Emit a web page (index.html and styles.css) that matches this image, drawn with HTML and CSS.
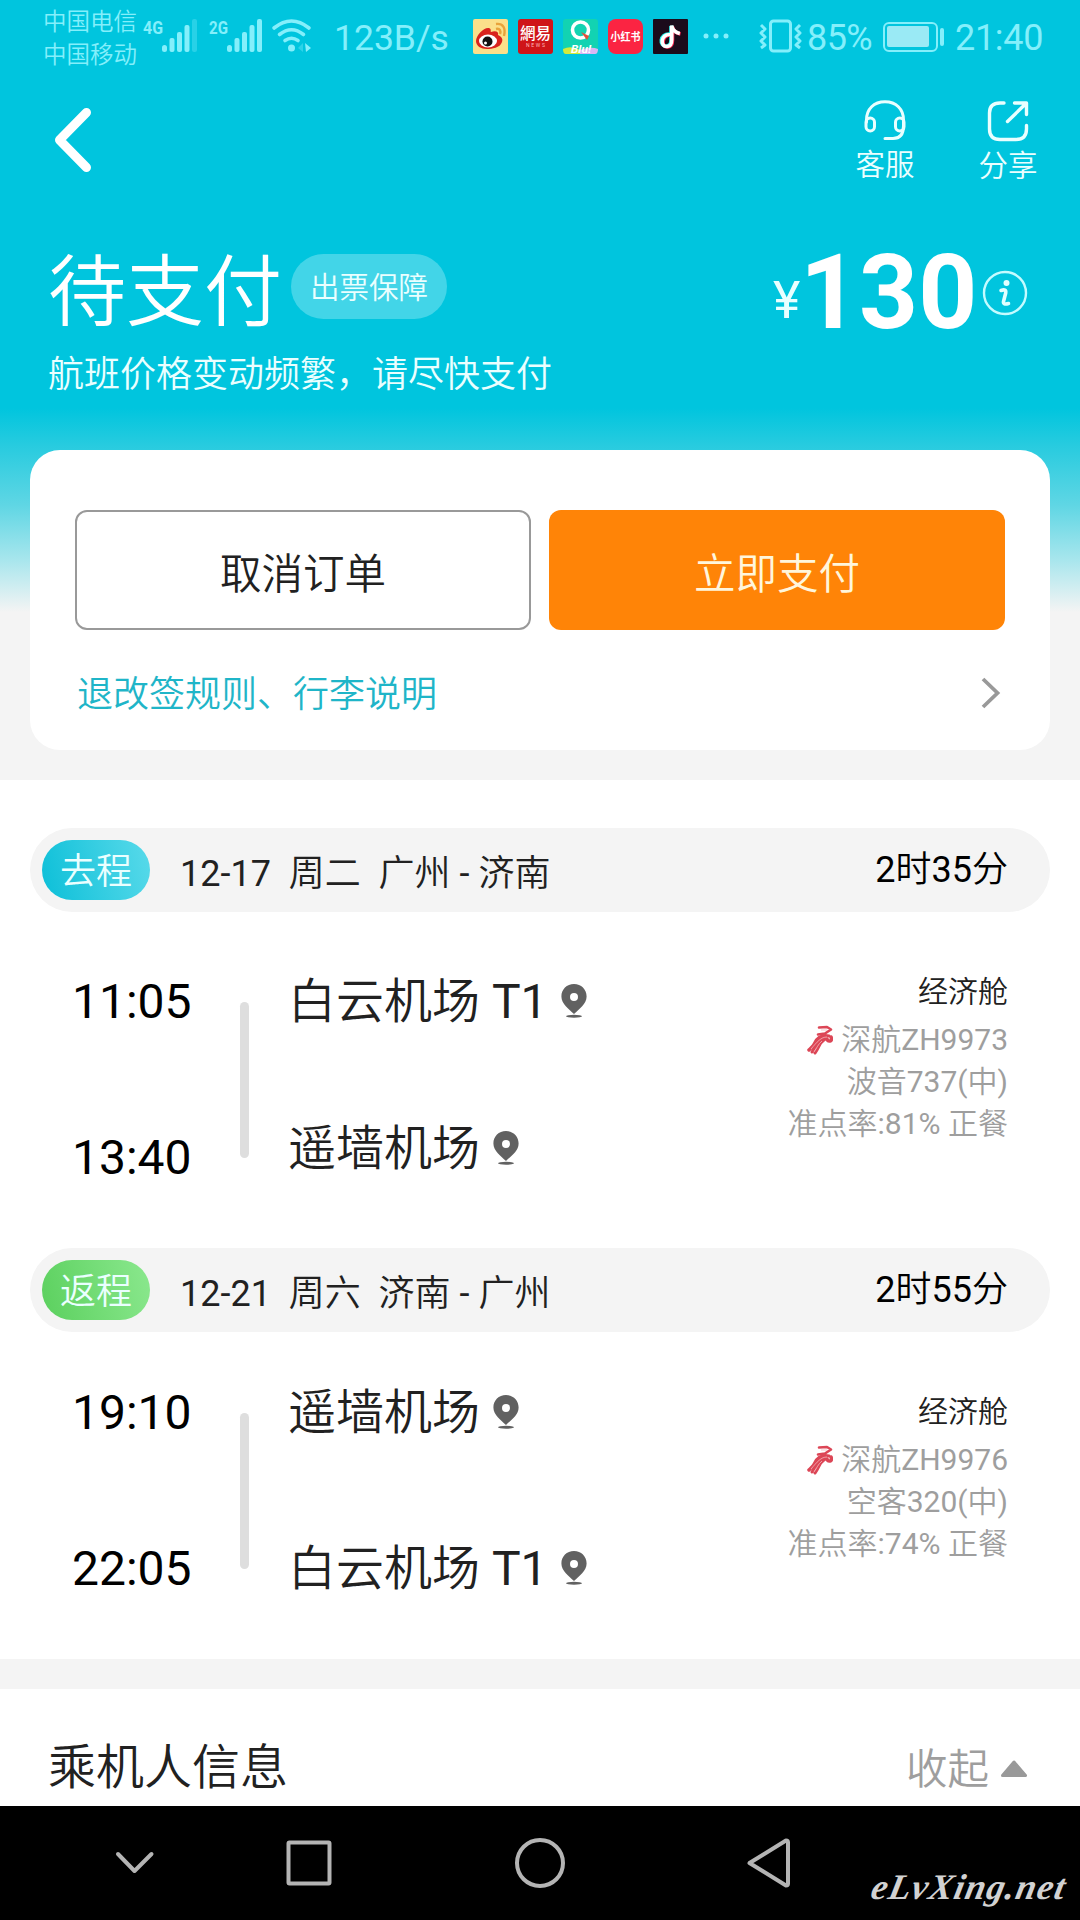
FILE: index.html
```html
<!DOCTYPE html>
<html lang="zh-CN">
  <head>
    <meta charset="UTF-8" />
    <meta name="viewport" content="width=device-width, initial-scale=1.0" />
    <title>订单详情</title>
    <link rel="stylesheet" href="styles.css">
  </head>
  <body>
    <!-- 公用图标 -->
    <svg class="symbols" width="0" height="0">
      <symbol id="pin" viewBox="0 0 26 34">
        <path fill="#616161" fill-rule="evenodd" d="M13 0C5.8 0 .4 5.400 .4 12.400C.4 20 8 25 13 30C18 25 25.600 20 25.600 12.400C25.600 5.400 20.200 0 13 0ZM13 9a4 4 0 1 1 0 8a4 4 0 1 1 0-8Z" />
        <ellipse cx="13" cy="32.300" rx="8" ry="1.500" fill="#616161" />
      </symbol>
      <symbol id="airline" viewBox="0 0 26 30">
        <g fill="none" stroke="#dc4656" stroke-linecap="round" stroke-linejoin="round">
          <path stroke-width="2.600" d="M12 2.500L20 2L24 4.500L18 8.500L11 9.500" />
          <path stroke-width="3.500" d="M24 12C26 17 21 17 20 14C14 12 9 18 2 25" />
          <path stroke-width="3" d="M22 11C14 9 9 14 7 19M17 15C12 18 12 23 8 28M13 17C8 20 7 24 5 27" />
        </g>
        <path fill="none" stroke="#f6b6bd" stroke-width="0.800" d="M14 5L20 5M20 12C14 12 10 17 4 24M15 16C11 19 10 23 7 27" />
      </symbol>
    </svg>

    <header class="hero">
      <div class="status">
        <div class="carrier">
          <span>中国电信</span>
          <span>中国移动</span>
        </div>
        <svg class="signal" width="170" height="40" viewBox="142 14 170 40">
          <g fill="#84effb">
            <text class="net" x="143" y="34" textLength="20" lengthAdjust="spacingAndGlyphs">4G</text>
            <rect x="162" y="45" width="5" height="7" rx="2.500" />
            <rect x="169.500" y="38" width="5" height="14" rx="2" />
            <rect x="177" y="32" width="5" height="20" rx="2" />
            <rect x="184.500" y="25" width="5" height="27" rx="2" />
            <rect x="192" y="19" width="5" height="33" rx="2" opacity="0.300" />
            <text class="net" x="209" y="34" textLength="19" lengthAdjust="spacingAndGlyphs">2G</text>
            <rect x="227" y="45" width="5" height="7" rx="2.500" />
            <rect x="234.500" y="38" width="5" height="14" rx="2" />
            <rect x="242" y="32" width="5" height="20" rx="2" />
            <rect x="249.500" y="25" width="5" height="27" rx="2" />
            <rect x="257" y="19" width="5" height="33" rx="2" />
            <circle cx="291.500" cy="48" r="3.500" />
            <path d="M305 43L311 48L306 52Z" />
            <path opacity="0.350" d="M303 43V52L298 48Z" />
          </g>
          <path fill="none" stroke="#84effb" stroke-width="3.600" stroke-linecap="round" d="M274 28Q291.500 14 309 28M279.500 34.500Q291.500 25 303.500 34.500M285 40.500Q291.500 36 298 40.500" />
        </svg>
        <span class="speed">123B/s</span>
        <div class="apps">
          <svg width="35" height="35" viewBox="0 0 35 35">
            <rect width="35" height="35" rx="2" fill="#fbe08a" />
            <path fill="#d9231d" d="M3 22C3 16 11 8 16 9C19 10 17 13 18 13C23 11 26 13 25 16C29 18 30 20 29 23C27 29 19 30 14 30C8 30 3 27 3 22Z" />
            <ellipse cx="15" cy="22" rx="9" ry="6.500" fill="#fff" />
            <circle cx="14.500" cy="22.500" r="5" fill="#111" />
            <circle cx="12.500" cy="24" r="1.500" fill="#fff" />
            <path fill="none" stroke="#e8a33b" stroke-width="2.400" d="M23 5C30 4 33 9 31 17M23 10C27 9 28 12 27 15" />
          </svg>
          <svg width="35" height="35" viewBox="0 0 35 35">
            <rect width="35" height="35" rx="3" fill="#cf1418" />
            <text x="2" y="20" fill="#fff" class="app-serif" textLength="31" lengthAdjust="spacingAndGlyphs">網易</text>
            <text x="8" y="28" fill="#fbb" class="app-tiny" textLength="19">NEWS</text>
          </svg>
          <svg width="35" height="35" viewBox="0 0 35 35">
            <rect width="35" height="35" rx="3" fill="#12d3b2" />
            <path fill="#d3ea3c" d="M0 30Q8 26 17 31V35H3Q0 35 0 30Z" />
            <path fill="#d8b6f5" d="M17 31Q28 27 35 30Q35 35 32 35H17Z" />
            <ellipse cx="17.500" cy="11" rx="8" ry="8" fill="none" stroke="#fff" stroke-width="3.600" />
            <path fill="#e2503b" d="M18 13L26 17L24 21Z" />
            <text x="8" y="33.500" fill="#fff" class="app-blu" textLength="20" lengthAdjust="spacingAndGlyphs">Blu!</text>
          </svg>
          <svg width="35" height="35" viewBox="0 0 35 35">
            <rect width="35" height="35" rx="8" fill="#fb2442" />
            <text x="2.500" y="21.500" fill="#fff" class="app-red" textLength="30" lengthAdjust="spacingAndGlyphs">小红书</text>
          </svg>
          <svg width="35" height="35" viewBox="0 0 35 35">
            <rect width="35" height="35" rx="1" fill="#1b0b1b" />
            <g fill="none" stroke-width="3.600">
              <path stroke="#25f4ee" d="M17 15C6 14 6 28 13.500 27C18 26.500 18 23 18 20V7C19 11 21 13 26 14" />
              <path stroke="#fe2c55" d="M18.500 16C8 15.500 8 29 15 28C19.500 27.500 19.500 24 19.500 21V8C20.500 12 23 14 27.500 15" />
              <path stroke="#fff" d="M17.800 15.500C7 14.800 7 28.500 14.200 27.500C18.700 27 18.700 23.500 18.700 20.500V6.500C19.700 11.500 22 13.500 26.800 14.500" />
            </g>
          </svg>
          <svg width="27" height="35" viewBox="0 0 27 35" class="more">
            <g fill="#84effb"><circle cx="3" cy="17" r="2.500" /><circle cx="13" cy="17" r="2.500" /><circle cx="23" cy="17" r="2.500" /></g>
          </svg>
        </div>
        <svg class="vibrate" width="44" height="34" viewBox="0 0 44 34">
          <g fill="none" stroke="#84effb" stroke-width="3" stroke-linejoin="round">
            <rect x="11.500" y="2" width="20" height="30" rx="3" />
            <path d="M2 6L6 10L2 14L6 18L2 22L6 26L2 29M41 6L37 10L41 14L37 18L41 22L37 26L41 29" />
          </g>
        </svg>
        <span class="percent">85%</span>
        <svg class="battery" width="62" height="30" viewBox="0 0 62 30">
          <rect x="1" y="1" width="53" height="28" rx="5" fill="none" stroke="#84effb" stroke-width="2" />
          <rect x="4" y="4" width="42" height="21" rx="2" fill="#9aeaf5" />
          <rect x="57" y="6" width="4" height="18" rx="2" fill="#84effb" />
        </svg>
        <span class="clock">21:40</span>
      </div>

      <div class="topbar">
        <svg class="back" width="38" height="66" viewBox="0 0 38 66">
          <path fill="none" stroke="#fff" stroke-width="9" stroke-linecap="round" stroke-linejoin="round" d="M32.500 5.500L5.500 33L32.500 60.500" />
        </svg>
        <div class="tool service">
          <svg width="42" height="42" viewBox="0 0 42 42">
            <g fill="none" stroke="#e9ffff" stroke-width="3" stroke-linecap="round" stroke-linejoin="round">
              <path d="M2.500 22V20C2.500 9 10 1.800 21 1.800S39.500 9 39.500 20V26C39.500 34 36 38.500 29 38.500H21" />
              <rect x="2" y="18" width="8.500" height="13" rx="4.200" />
              <rect x="31.500" y="18" width="8.500" height="13" rx="4.200" />
            </g>
          </svg>
          <span>客服</span>
        </div>
        <div class="tool share">
          <svg width="42" height="42" viewBox="0 0 42 42">
            <g fill="none" stroke="#e9ffff" stroke-width="3.400" stroke-linecap="round" stroke-linejoin="round">
              <path d="M17 3H13Q2.500 3 2.500 13V29Q2.500 39.500 13 39.500H29Q39.500 39.500 39.500 29V25.500" />
              <path d="M27.500 3H39.500V14.500M38.500 4L20.500 21.500" />
            </g>
          </svg>
          <span>分享</span>
        </div>
      </div>

      <div class="summary">
        <h1 class="state">待支付</h1>
        <span class="guard">出票保障</span>
        <span class="yen">¥</span>
        <strong class="price">130</strong>
        <svg class="info-icon" width="46" height="46" viewBox="0 0 46 46">
          <circle cx="23" cy="23" r="21" fill="none" stroke="#c4fbff" stroke-width="2.400" />
          <circle cx="24.500" cy="13" r="3" fill="#e0ffff" />
          <path fill="none" stroke="#e0ffff" stroke-width="3.600" stroke-linecap="round" stroke-linejoin="round" d="M19 20.500Q24.500 18.500 23.700 23L21.500 31.500Q21 35 26.500 33.500" />
        </svg>
      </div>
      <p class="notice">航班价格变动频繁，请尽快支付</p>
    </header>

    <section class="card">
      <div class="actions">
        <button type="button" class="btn btn-cancel">取消订单</button>
        <button type="button" class="btn btn-pay">立即支付</button>
      </div>
      <div class="rules">
        <span>退改签规则、行李说明</span>
        <svg width="20" height="32" viewBox="0 0 20 32">
          <path fill="none" stroke="#999" stroke-width="3.800" d="M2 2L16.500 16L2 30" />
        </svg>
      </div>
    </section>

    <section class="flights">
      <div class="leg-head">
        <span class="tag tag-go">去程</span>
        <span class="date">12-17  周二  广州 - 济南</span>
        <span class="duration">2时35分</span>
      </div>
      <div class="leg leg-go">
        <div class="times"><span>11:05</span><span>13:40</span></div>
        <div class="line"></div>
        <div class="places">
          <span>白云机场 T1 <svg class="pin"><use href="#pin" /></svg></span>
          <span>遥墙机场 <svg class="pin"><use href="#pin" /></svg></span>
        </div>
        <div class="detail">
          <span class="cabin">经济舱</span>
          <span><svg class="airline"><use href="#airline" /></svg>深航ZH9973</span>
          <span>波音737(中)</span>
          <span>准点率:81% 正餐</span>
        </div>
      </div>

      <div class="leg-head">
        <span class="tag tag-back">返程</span>
        <span class="date">12-21  周六  济南 - 广州</span>
        <span class="duration">2时55分</span>
      </div>
      <div class="leg leg-back">
        <div class="times"><span>19:10</span><span>22:05</span></div>
        <div class="line"></div>
        <div class="places">
          <span>遥墙机场 <svg class="pin"><use href="#pin" /></svg></span>
          <span>白云机场 T1 <svg class="pin"><use href="#pin" /></svg></span>
        </div>
        <div class="detail">
          <span class="cabin">经济舱</span>
          <span><svg class="airline"><use href="#airline" /></svg>深航ZH9976</span>
          <span>空客320(中)</span>
          <span>准点率:74% 正餐</span>
        </div>
      </div>
    </section>

    <section class="passenger">
      <h2>乘机人信息</h2>
      <span class="fold">收起</span>
      <svg width="28" height="18" viewBox="0 0 28 18">
        <path fill="#999" stroke="#999" stroke-width="3" stroke-linejoin="round" d="M14 2L25.500 15.500H2.500Z" />
      </svg>
    </section>

    <footer class="navbar">
      <svg width="1080" height="114" viewBox="0 0 1080 114">
        <g fill="none" stroke="#b4b4b4" stroke-width="4" stroke-linecap="round" stroke-linejoin="round">
          <path d="M118 48L134.500 65L151.500 48" />
          <rect x="288.500" y="36.500" width="41" height="41" rx="1" />
          <circle cx="540" cy="57" r="23" />
          <path d="M749.500 57L786 34.500Q788 34.500 788 36.500V77.500Q788 79.500 786 79.500Z" />
        </g>
      </svg>
      <span class="watermark">eLvXing.net</span>
    </footer>
  </body>
</html>
```
FILE: styles.css
```css
* {
  box-sizing: border-box;
}
body {
  margin: 0;
  width: 1080px;
  height: 1920px;
  overflow: hidden;
  display: flex;
  flex-direction: column;
  background: linear-gradient(#00c5de 0, #00c5de 408px, #27cbdf 445px, #5fd6e4 505px, #a8e6ed 560px, #f4f4f4 612px);
  font-family: Roboto, "Noto Sans CJK SC DemiLight", "Noto Sans CJK SC Light", "Noto Sans CJK SC", sans-serif;
  color: #212121;
}
svg {
  display: block;
  flex: none;
}
.symbols {
  position: absolute;
}
h1,
h2,
p {
  margin: 0;
  font-weight: 400;
}

/* 顶部 */
.hero {
  height: 450px;
  color: #eaffff;
}
.status {
  display: flex;
  align-items: flex-start;
  height: 72px;
  padding-left: 43px;
  color: #84effb;
  font-size: 36px;
  line-height: 36px;
}
.carrier {
  width: 99px;
  padding-top: 6px;
  font-size: 23.5px;
  line-height: 33px;
}
.carrier span {
  display: block;
}
.signal {
  margin-top: 14px;
  overflow: visible;
}
.net {
  font-size: 19px;
  font-weight: 700;
}
.speed {
  width: 139px;
  margin: 20px 0 0 22px;
  font-size: 35.5px;
}
.apps {
  display: flex;
  gap: 10px;
  padding-top: 19px;
}
.more {
  margin-left: 5px;
}
.app-serif {
  font: 500 16px "Noto Sans CJK TC", sans-serif;
}
.app-tiny {
  font-size: 5px;
}
.app-blu {
  font: italic 700 11px Roboto, sans-serif;
}
.app-red {
  font: 700 11px "Noto Sans CJK SC", sans-serif;
}
.vibrate {
  margin: 19px 0 0 29px;
}
.percent {
  width: 80px;
  margin-top: 20px;
  padding-left: 4px;
  letter-spacing: -0.6px;
}
.battery {
  margin-top: 22px;
}
.clock {
  margin: 20px 0 0 10px;
  letter-spacing: -0.3px;
}

.topbar {
  display: flex;
  height: 158px;
  padding-left: 54px;
  font-size: 29.5px;
  line-height: 36px;
}
.back {
  margin: 35px 763px 0 0;
}
.tool {
  display: flex;
  flex-direction: column;
  align-items: center;
  width: 60px;
}
.service {
  padding-top: 28px;
}
.service span {
  margin-top: 5px;
}
.share {
  margin-left: 63px;
  padding-top: 28px;
}
.share span {
  margin-top: 6px;
}

.summary {
  display: flex;
  height: 116px;
  padding-left: 48px;
}
.state {
  width: 243px;
  padding-top: 19px;
  font-size: 78px;
  line-height: 90px;
  color: #fff;
}
.guard {
  width: 156px;
  height: 65px;
  margin-top: 24px;
  padding-top: 2px;
  border-radius: 33px;
  background: #42d5e8;
  font-size: 29.5px;
  line-height: 65px;
  text-align: center;
}
.yen {
  width: 27px;
  margin: 41px 0 0 326px;
  font-size: 52px;
  line-height: 60px;
}
.price {
  width: 181px;
  padding-top: 13px;
  font-size: 103px;
  line-height: 100px;
  color: #fff;
}
.info-icon {
  margin-top: 40px;
  margin-left: 1px;
}
.notice {
  padding: 8px 0 0 48px;
  font-size: 36px;
  line-height: 42px;
}

/* 支付卡片 */
.card {
  flex: none;
  height: 300px;
  margin: 0 30px 30px;
  padding: 60px 45px 0;
  border-radius: 30px;
  background: #fff;
}
.actions {
  display: flex;
  gap: 18px;
}
.btn {
  flex: none;
  width: 456px;
  height: 120px;
  padding: 2px 0 0;
  border: 2px solid #999;
  border-radius: 12px;
  background: #fff;
  color: #212121;
  font-family: inherit;
  font-size: 41.5px;
}
.btn-pay {
  border: 0;
  background: #ff8407;
  color: #fff6dc;
}
.rules {
  display: flex;
  align-items: center;
  justify-content: space-between;
  height: 54px;
  margin-top: 36px;
  padding: 0 4px 0 2px;
  color: #1fb5c8;
  font-size: 36px;
}
.rules span {
  padding-bottom: 4px;
}

/* 航班 */
.flights {
  flex: none;
  height: 879px;
  padding: 48px 30px 0;
  background: #fff;
}
.leg-head {
  display: flex;
  align-items: center;
  height: 84px;
  padding: 0 42px 0 12px;
  border-radius: 42px;
  background: #f4f4f4;
  font-size: 36px;
}
.tag {
  width: 108px;
  height: 60px;
  padding-top: 2px;
  border-radius: 30px;
  line-height: 60px;
  text-align: center;
  color: #eaffff;
}
.tag-go {
  background: linear-gradient(75deg, #0cbfd8, #59daea);
}
.tag-back {
  background: linear-gradient(75deg, #5bd05e, #8be88e);
}
.date {
  flex: 1;
  padding: 0 0 1px 30px;
  white-space: pre;
}
.duration {
  padding-bottom: 8px;
  color: #000;
}
.leg {
  display: flex;
  padding: 0 42px 0 42px;
}
.leg-go {
  height: 336px;
}
.leg-back {
  height: 327px;
}
.times,
.places {
  display: flex;
  flex-direction: column;
  gap: 100px;
  padding-top: 62px;
  font-size: 48px;
  line-height: 56px;
}
.times {
  width: 168px;
  color: #000;
}
.line {
  width: 9px;
  height: 156px;
  margin-top: 90px;
  border-radius: 5px;
  background: #dedede;
}
.places {
  flex: 1;
  padding-left: 39px;
}
.leg-go .places {
  gap: 91px;
}
.leg-back .times,
.leg-back .places {
  padding-top: 53px;
}
.leg-back .line {
  margin-top: 81px;
}
.places span {
  display: flex;
  align-items: center;
}
.pin {
  width: 26px;
  height: 34px;
  margin: 0 0 3px 13px;
}
.detail {
  padding-top: 59px;
  font-size: 30px;
  line-height: 42px;
  color: #9e9e9e;
}
.detail span {
  display: flex;
  justify-content: flex-end;
  align-items: center;
}
.detail .cabin {
  margin-bottom: 6px;
  color: #212121;
}
.airline {
  width: 26px;
  height: 30px;
  margin-right: 8px;
}

/* 乘机人 */
.passenger {
  flex: none;
  display: flex;
  align-items: center;
  height: 117px;
  margin-top: 30px;
  padding: 38px 52px 0 48px;
  background: #fff;
}
.passenger h2 {
  flex: 1;
  padding-top: 3px;
  font-size: 48px;
  line-height: 56px;
}
.fold {
  margin-right: 11px;
  padding-bottom: 2px;
  font-size: 41.5px;
  color: #9e9e9e;
}
.passenger svg {
  margin-top: 4px;
}

.navbar {
  position: relative;
  flex: none;
  height: 114px;
  background: #000;
}
.watermark {
  position: absolute;
  right: 14px;
  bottom: 11px;
  font: italic 700 36px "Liberation Serif", serif;
  line-height: 44px;
  letter-spacing: 1.2px;
  transform: skewX(-12deg);
  color: #d2d2d2;
}
```
